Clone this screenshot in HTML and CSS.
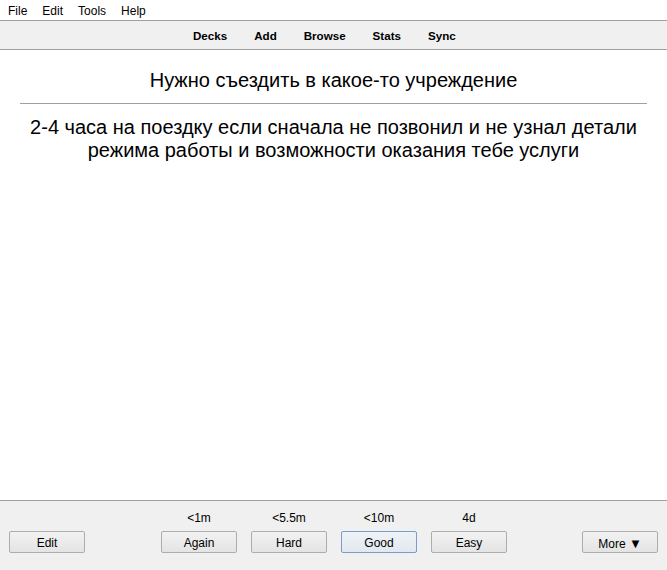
FILE: index.html
```html
<!DOCTYPE html>
<html>
<head>
<meta charset="utf-8">
<link rel="stylesheet" href="styles.css">
</head>
<body>
<div class="app">
  <div class="menubar">
    <span class="menu-item">File</span>
    <span class="menu-item">Edit</span>
    <span class="menu-item">Tools</span>
    <span class="menu-item">Help</span>
  </div>
  <div class="toolbar">
    <span class="tool">Decks</span>
    <span class="tool">Add</span>
    <span class="tool">Browse</span>
    <span class="tool">Stats</span>
    <span class="tool">Sync</span>
  </div>
  <div class="card">
    <div class="question">Нужно съездить в какое-то учреждение</div>
    <hr class="divider">
    <div class="answer">2-4 часа на поездку если сначала не позвонил и не узнал детали режима работы и возможности оказания тебе услуги</div>
  </div>
  <div class="bottombar">
    <div class="side">
      <button class="btn">Edit</button>
    </div>
    <div class="answers">
      <div class="ans"><span class="ivl">&lt;1m</span><button class="btn">Again</button></div>
      <div class="ans"><span class="ivl">&lt;5.5m</span><button class="btn">Hard</button></div>
      <div class="ans"><span class="ivl">&lt;10m</span><button class="btn btn-focus">Good</button></div>
      <div class="ans"><span class="ivl">4d</span><button class="btn">Easy</button></div>
    </div>
    <div class="side side-right">
      <button class="btn">More <span class="arrow">▼</span></button>
    </div>
  </div>
</div>
</body>
</html>
```
FILE: styles.css
```css
html, body {
  margin: 0;
  padding: 0;
  background: #ffffff;
}
.app {
  width: 667px;
  height: 570px;
  display: flex;
  flex-direction: column;
  font-family: "Liberation Sans", Arial, sans-serif;
  font-size: 12px;
  color: #000;
}
.menubar {
  height: 20px;
  display: flex;
  align-items: center;
  background: #ffffff;
  border-bottom: 1px solid #a0a0a0;
  padding-left: 8px;
  box-sizing: content-box;
}
.menu-item {
  margin-right: 15px;
  line-height: 20px;
  padding-top: 2px;
}
.toolbar {
  height: 28px;
  display: flex;
  justify-content: flex-start;
  align-items: center;
  gap: 27px;
  background: #f0f0f0;
  border-bottom: 1px solid #a0a0a0;
  font-weight: bold;
  font-size: 11.6px;
  padding-left: 193px;
}
.tool {
  padding-top: 0px;
}
.card {
  flex: 1;
  background: #ffffff;
  padding: 19px 20px 0 20px;
  font-size: 20px;
  text-align: center;
  line-height: 23px;
}
.question {
  line-height: 23px;
}
.divider {
  border: none;
  border-top: 1px solid #a0a0a0;
  margin: 11px 0 12px 0;
  height: 0;
}
.answer {
  padding: 0 8px;
}
.bottombar {
  border-top: 1px solid #a0a0a0;
  background: #f0f0f0;
  display: flex;
  justify-content: space-between;
  align-items: flex-start;
  padding: 9px 10px 0 9px;
  box-sizing: content-box;
  height: 60px;
}
.side {
  width: 76px;
  padding-top: 21px;
}
.side-right {
  display: flex;
  justify-content: flex-end;
  margin-right: -1px;
}
.answers {
  display: flex;
  gap: 14px;
  margin-left: 1px;
}
.ans {
  display: flex;
  flex-direction: column;
  align-items: center;
  gap: 5px;
}
.ivl {
  line-height: 16px;
  height: 16px;
}
.btn {
  width: 76px;
  height: 22px;
  box-sizing: border-box;
  border: 1px solid #adadad;
  border-radius: 2px;
  background: linear-gradient(#f2f2f2, #e4e4e4);
  font-family: "Liberation Sans", Arial, sans-serif;
  font-size: 12px;
  color: #000;
  padding: 2px 0 0 0;
  margin: 0;
}
.btn-focus {
  border-color: #7a9cc6;
  background: linear-gradient(#eef3f8, #e2e8ee);
}
.arrow {
  font-size: 13px;
}
```
